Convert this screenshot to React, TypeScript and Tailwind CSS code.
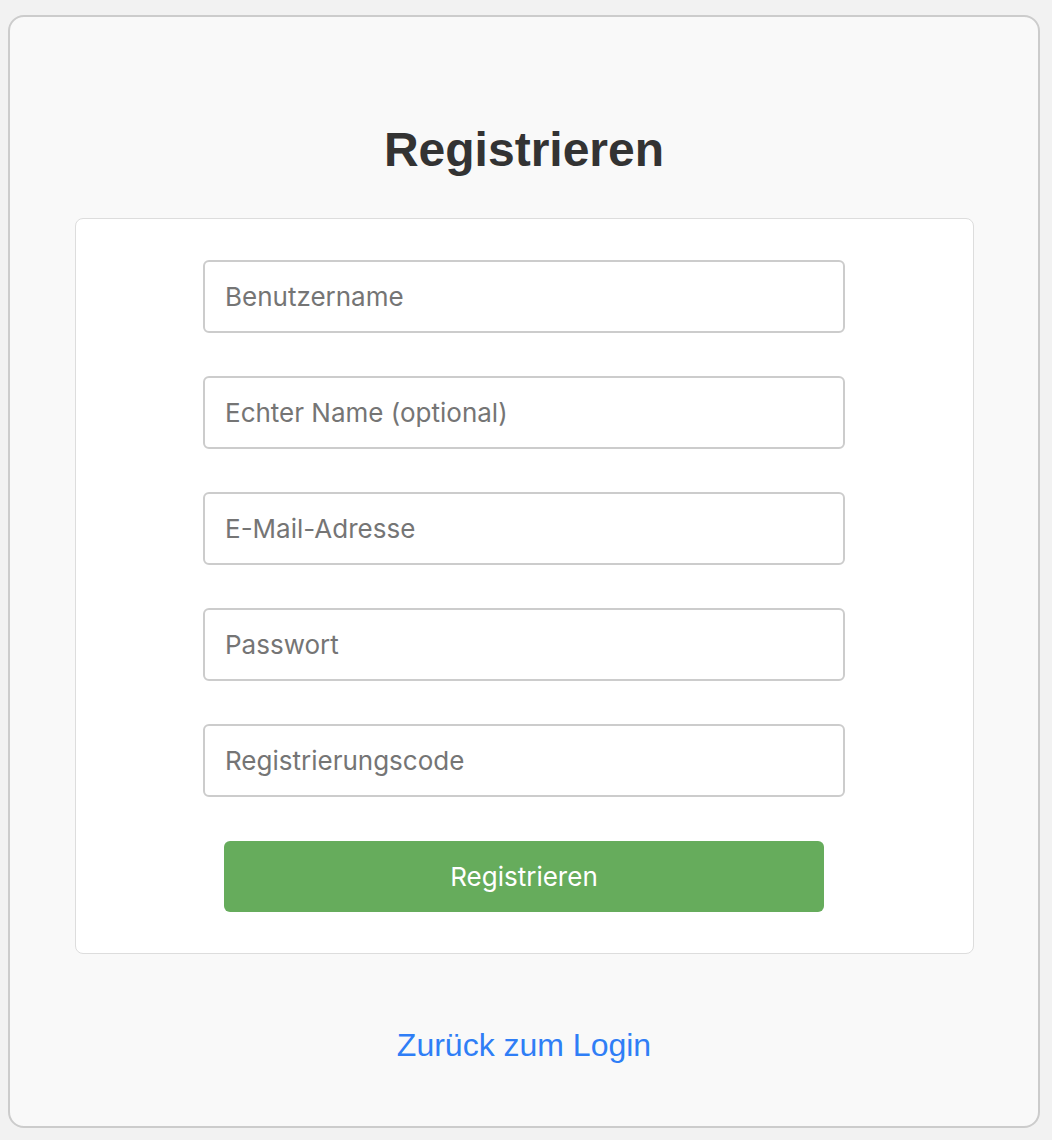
import React from 'react';

const fields = ['Benutzername', 'Echter Name (optional)', 'E-Mail-Adresse', 'Passwort', 'Registrierungscode'];

export default function App() {
  return (
    <div className="min-h-[1140px] w-full bg-[#f2f2f2] pt-[15px] pl-[8px]">
      <div className="w-[1032px] h-[1113px] border-2 border-[#cccccc] rounded-[16px] bg-[#f9f9f9] flex flex-col items-center pt-[105px]">
        <h1 className="text-[48px] leading-[56px] font-bold text-[#333333] font-['Liberation_Sans',Arial,sans-serif]">
          Registrieren
        </h1>

        {/* form card */}
        <div className="mt-[40px] w-[899px] bg-white border border-[#dddddd] rounded-[8px] pt-[41px] pb-[41px] flex flex-col items-center gap-[43px]">
          {fields.map((f) => (
            <input
              key={f}
              type={f === 'Passwort' ? 'password' : 'text'}
              placeholder={f}
              className="w-[642px] h-[73px] px-[20px] border-2 border-[#cccccc] rounded-[6px] bg-white text-[26px] font-['Inter',sans-serif] placeholder:text-[#757575] outline-none"
            />
          ))}
          <button className="mt-[1px] w-[600px] h-[71px] bg-[#66ac5c] rounded-[6px] text-white text-[26px] font-['Inter',sans-serif]">
            Registrieren
          </button>
        </div>

        <a href="#" className="mt-[72px] text-[32px] leading-[38px] text-[#2f7ef6] font-['Liberation_Sans',Arial,sans-serif]">
          Zurück zum Login
        </a>
      </div>
    </div>
  );
}
